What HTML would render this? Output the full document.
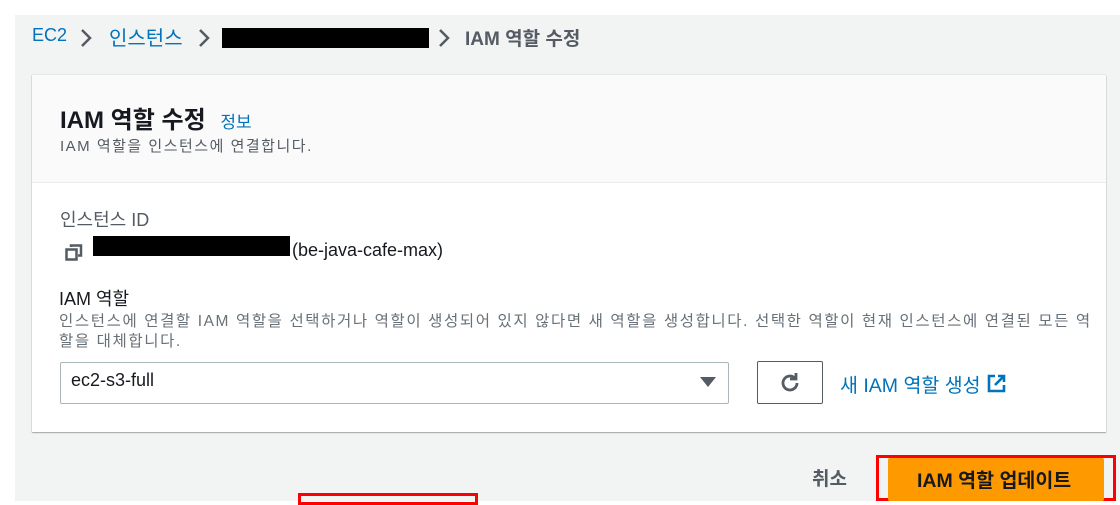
<!DOCTYPE html>
<html><head><meta charset="utf-8"><style>
*{margin:0;padding:0;box-sizing:border-box}
body{width:1120px;height:501px;background:#fff;font-family:"Liberation Sans","Noto Sans CJK KR",sans-serif;position:relative;overflow:hidden;color:#16191f}
.bg{position:absolute;left:15px;top:15px;width:1105px;height:486px;background:#f2f3f3}
.a{position:absolute;white-space:nowrap}
.panel{position:absolute;left:32px;top:75px;width:1074px;height:357px;background:#fff;box-shadow:0 1px 1px rgba(0,0,0,.3),0 0 1px rgba(0,0,0,.25)}
.hdr{position:absolute;left:0;top:0;width:100%;height:108px;background:#fafafa;border-bottom:1px solid #eaeded}
.blk{position:absolute;background:#000}
.ch{position:absolute}
</style></head><body>
<div class="bg"></div>
<div class="a" style="left:32px;top:25px;font-size:18px;color:#0073bb">EC2</div>
<svg class="ch" style="left:79px;top:27px" width="14" height="22" viewBox="0 0 14 22"><path d="M3 3l8 8-8 8" fill="none" stroke="#545b64" stroke-width="2.5"/></svg>
<div class="a" style="left:109px;top:22px;font-size:20px;color:#0073bb">인스턴스</div>
<svg class="ch" style="left:197px;top:27px" width="14" height="22" viewBox="0 0 14 22"><path d="M3 3l8 8-8 8" fill="none" stroke="#545b64" stroke-width="2.5"/></svg>
<div class="blk" style="left:222px;top:28px;width:207px;height:20px"></div>
<svg class="ch" style="left:437px;top:27px" width="14" height="22" viewBox="0 0 14 22"><path d="M3 3l8 8-8 8" fill="none" stroke="#545b64" stroke-width="2.5"/></svg>
<div class="a" style="left:465px;top:24px;font-size:19px;color:#545b64;font-weight:bold">IAM 역할 수정</div>
<div class="panel">
 <div class="hdr"></div>
 <div class="a" style="left:28px;top:25px;font-size:24px;font-weight:bold">IAM 역할 수정 <span style="font-size:17px;color:#0073bb;font-weight:normal;margin-left:8px">정보</span></div>
 <div class="a" style="left:28px;top:60px;font-size:15px;letter-spacing:1.5px;color:#545b64">IAM 역할을 인스턴스에 연결합니다.</div>
 <div class="a" style="left:28px;top:131px;font-size:18px;color:#545b64">인스턴스 ID</div>
 <svg class="a" style="left:33px;top:169px" width="18" height="18" viewBox="0 0 18 18"><rect x="1.5" y="5.5" width="10" height="10" fill="none" stroke="#545b64" stroke-width="2.5"/><path d="M6 3V1.5h10v10H13" fill="none" stroke="#545b64" stroke-width="2.5"/></svg>
 <div class="blk" style="left:61px;top:161px;width:197px;height:20px"></div>
 <div class="a" style="left:260px;top:165px;font-size:18px;color:#16191f">(be-java-cafe-max)</div>
 <div class="a" style="left:27px;top:210px;font-size:18px">IAM 역할</div>
 <div class="a" style="left:27px;top:237px;font-size:15.5px;letter-spacing:1.6px;color:#687078;line-height:20px;white-space:normal;word-break:break-all;width:1040px">인스턴스에 연결할 IAM 역할을 선택하거나 역할이 생성되어 있지 않다면 새 역할을 생성합니다. 선택한 역할이 현재 인스턴스에 연결된 모든 역할을 대체합니다.</div>
 <div class="a" style="left:28px;top:287px;width:669px;height:42px;border:1px solid #aab7b8;border-radius:2px;background:#fff"></div>
 <div class="a" style="left:39px;top:295px;font-size:18px">ec2-s3-full</div>
 <div class="a" style="left:668px;top:302px;width:0;height:0;border-left:8px solid transparent;border-right:8px solid transparent;border-top:10px solid #545b64"></div>
 <div class="a" style="left:725px;top:286px;width:66px;height:43px;border:1px solid #545b64;border-radius:2px;background:#fff"></div>
 <svg class="a" style="left:746px;top:296px" width="24" height="24" viewBox="0 0 24 24"><path d="M19 12a7 7 0 1 1-2.2-5.1" fill="none" stroke="#545b64" stroke-width="2.8"/><path d="M18 2v6h-6" fill="none" stroke="#545b64" stroke-width="2.8"/></svg>
 <div class="a" style="left:808px;top:294px;font-size:19.5px;color:#0073bb">새 IAM 역할 생성</div>
 <svg class="a" style="left:955px;top:299px" width="19" height="19" viewBox="0 0 19 19"><path d="M8 2H2v15h15v-6" fill="none" stroke="#0073bb" stroke-width="2.6"/><path d="M11 2h6v6M17 2L8 11" fill="none" stroke="#0073bb" stroke-width="2.6"/></svg>
</div>
<div class="a" style="left:812px;top:464px;font-size:19px;font-weight:bold;color:#545b64">취소</div>
<div class="a" style="left:876px;top:455px;width:240px;height:46px;border:3px solid #f00"></div>
<div class="a" style="left:888px;top:458px;width:216px;height:43px;background:#ff9900;border-radius:2px"></div>
<div class="a" style="left:917px;top:464px;font-size:19.5px;font-weight:bold;color:#16191f">IAM 역할 업데이트</div>
<div class="a" style="left:298px;top:493px;width:180px;height:12px;border:3px solid #f00"></div>
</body></html>
